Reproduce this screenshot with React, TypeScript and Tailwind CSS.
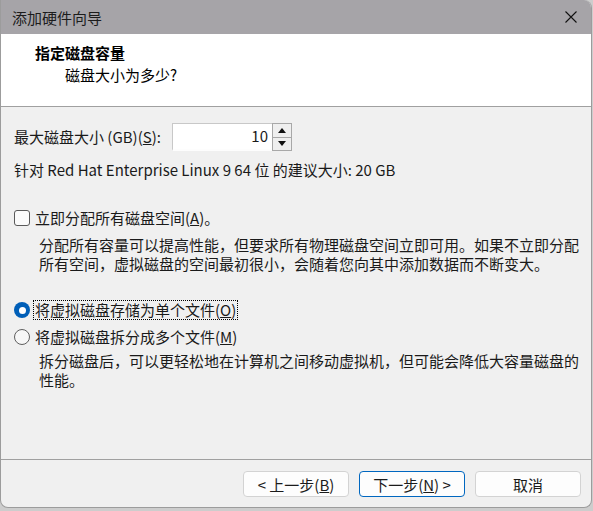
import React from 'react';

const font = "font-['Microsoft_YaHei','Noto_Sans_CJK_SC',sans-serif]";

function Checkbox() {
  return <span className="w-4 h-4 shrink-0 rounded-[3px] border border-[#5a5a5a] bg-[#fbfbfb]" />;
}

function Radio({ checked }: { checked?: boolean }) {
  if (checked) {
    return (
      <span className="w-4 h-4 shrink-0 rounded-full bg-[#005fb8] flex items-center justify-center">
        <span className="w-[7px] h-[7px] rounded-full bg-white" />
      </span>
    );
  }
  return <span className="w-4 h-4 shrink-0 rounded-full border border-[#5f5f5f] bg-[#f7f7f7]" />;
}

function Spinner() {
  return (
    <div className="flex h-[28px]">
      <div className="w-[100px] h-full bg-white border-t border-l border-[#c8c8c8] border-b-2 border-b-[#fdfdfd] flex items-center justify-end pr-1">
        10
      </div>
      <div className="w-[20px] h-full border border-[#a8a8a8] flex flex-col bg-[#efefef]">
        <div className="flex-1 flex items-center justify-center border-b border-[#a8a8a8]">
          <svg width="8" height="5" viewBox="0 0 8 5">
            <path d="M0 5 L4 0 L8 5 Z" fill="#111" />
          </svg>
        </div>
        <div className="flex-1 flex items-center justify-center">
          <svg width="8" height="5" viewBox="0 0 8 5">
            <path d="M0 0 L4 5 L8 0 Z" fill="#111" />
          </svg>
        </div>
      </div>
    </div>
  );
}

function Button({ children, primary }: { children: React.ReactNode; primary?: boolean }) {
  return (
    <button
      className={
        'w-[106px] h-[26px] rounded-[4px] bg-[#fdfdfd] text-[15px] text-[#1b1b1b] flex items-center justify-center leading-none ' +
        (primary ? 'border border-[#0067c0]' : 'border border-[#d3d3d3]')
      }
    >
      {children}
    </button>
  );
}

export default function App() {
  return (
    <div className={`w-[593px] h-[511px] bg-[#cdcdcd] overflow-hidden ${font} text-[15px] text-[#1a1a1a]`}>
      <div className="w-[592px] h-[508px] flex flex-col bg-[#f0f0f0] border-l border-r border-b border-[#9c9c9c] rounded-b-[8px] rounded-tr-[8px] overflow-hidden">
        {/* Title bar */}
        <div className="h-[34px] shrink-0 bg-[#a6a4a8] flex items-center justify-between pl-[11px] pr-[14px]">
          <span className="leading-none text-[#1c1c1c]">添加硬件向导</span>
          <svg width="12" height="12" viewBox="0 0 12 12">
            <path d="M0.5 0.5 L11.5 11.5 M11.5 0.5 L0.5 11.5" stroke="#111" strokeWidth="1.1" />
          </svg>
        </div>

        {/* Header */}
        <div className="h-[73px] shrink-0 bg-white border-b border-[#a0a0a0] pt-[9px] flex flex-col gap-[2px]">
          <div className="pl-[34px] leading-[20px] font-bold text-black">指定磁盘容量</div>
          <div className="pl-[64px] leading-[20px] text-black">磁盘大小为多少?</div>
        </div>

        {/* Content */}
        <div className="flex-1 flex flex-col pl-[13px] pt-[16px]">
          <div className="flex items-center h-[28px]">
            <span className="w-[158px]">
              最大磁盘大小 (GB)(<u>S</u>):
            </span>
            <Spinner />
          </div>
          <div className="mt-[9px] leading-[20px]">针对 Red Hat Enterprise Linux 9 64 位 的建议大小: 20 GB</div>

          <div className="mt-[28px] flex items-center gap-[5px] leading-[20px]">
            <Checkbox />
            <span>
              立即分配所有磁盘空间(<u>A</u>)。
            </span>
          </div>
          <p className="mt-[7px] pl-[25px] pr-[12px] leading-[19px]">
            分配所有容量可以提高性能，但要求所有物理磁盘空间立即可用。如果不立即分配所有空间，虚拟磁盘的空间最初很小，会随着您向其中添加数据而不断变大。
          </p>

          <div className="mt-[28px] flex items-center gap-[4px] leading-[18px]">
            <Radio checked />
            <span className="outline-1 outline-dotted outline-black px-[1px]">
              将虚拟磁盘存储为单个文件(<u>O</u>)
            </span>
          </div>
          <div className="mt-[8px] flex items-center gap-[5px] leading-[20px]">
            <Radio />
            <span>
              将虚拟磁盘拆分成多个文件(<u>M</u>)
            </span>
          </div>
          <p className="mt-[4px] pl-[25px] pr-[12px] leading-[19px]">
            拆分磁盘后，可以更轻松地在计算机之间移动虚拟机，但可能会降低大容量磁盘的性能。
          </p>
        </div>

        {/* Footer */}
        <div className="h-[48px] shrink-0 border-t border-[#a0a0a0] flex items-start justify-end gap-[10px] pt-[11px] pr-[10px]">
          <Button>
            &lt; 上一步(<u>B</u>)
          </Button>
          <Button primary>
            下一步(<u>N</u>) &gt;
          </Button>
          <Button>取消</Button>
        </div>
      </div>
    </div>
  );
}
